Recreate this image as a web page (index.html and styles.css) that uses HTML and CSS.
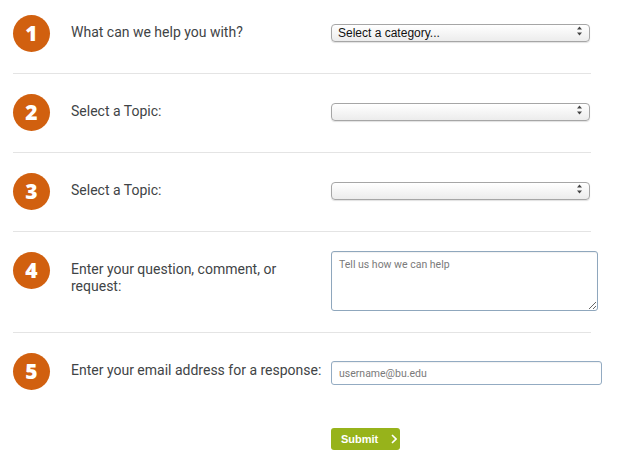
FILE: index.html
```html
<!DOCTYPE html>
<html lang="en">
<head>
  <meta charset="UTF-8">
  <title>Contact Us</title>
  <link rel="stylesheet" href="styles.css">
</head>
<body>
  <form class="help-form">
    <div class="step">
      <div class="num">1</div>
      <label class="step-label">What can we help you with?</label>
      <div class="select-wrap">
        <select class="select">
          <option>Select a category...</option>
        </select>
        <svg class="arrows" width="7" height="10" viewBox="0 0 7 10"><path d="M3.5 0.5 L6 3.5 H1 Z M3.5 9.5 L6 6.5 H1 Z" fill="#444"/></svg>
      </div>
    </div>

    <div class="step">
      <div class="num">2</div>
      <label class="step-label">Select a Topic:</label>
      <div class="select-wrap">
        <select class="select"><option></option></select>
        <svg class="arrows" width="7" height="10" viewBox="0 0 7 10"><path d="M3.5 0.5 L6 3.5 H1 Z M3.5 9.5 L6 6.5 H1 Z" fill="#444"/></svg>
      </div>
    </div>

    <div class="step">
      <div class="num">3</div>
      <label class="step-label">Select a Topic:</label>
      <div class="select-wrap">
        <select class="select"><option></option></select>
        <svg class="arrows" width="7" height="10" viewBox="0 0 7 10"><path d="M3.5 0.5 L6 3.5 H1 Z M3.5 9.5 L6 6.5 H1 Z" fill="#444"/></svg>
      </div>
    </div>

    <div class="step">
      <div class="num">4</div>
      <label class="step-label">Enter your question, comment, or request:</label>
      <textarea class="message" placeholder="Tell us how we can help"></textarea>
    </div>

    <div class="step last">
      <div class="num">5</div>
      <label class="step-label">Enter your email address for a response:</label>
      <input class="email" type="email" placeholder="username@bu.edu">
    </div>

    <div class="actions">
      <button type="button" class="submit">Submit
        <svg width="6" height="10" viewBox="0 0 6 10"><path d="M1 1 L5 5 L1 9" fill="none" stroke="#fff" stroke-width="1.6"/></svg>
      </button>
    </div>
  </form>
</body>
</html>
```

FILE: styles.css
```css
body {
  margin: 0;
  padding: 0 13px;
  background: #fff;
  font-family: Roboto, 'Liberation Sans', sans-serif;
  color: #3f4446;
}

.help-form {
  width: 578px;
}

.step {
  display: flex;
  align-items: flex-start;
  padding: 20px 0 21px;
  border-bottom: 1px solid #e4e4e4;
}

.step:first-child {
  padding-top: 15px;
}

.step.last {
  border-bottom: none;
  padding-bottom: 0;
}

.num {
  width: 37px;
  height: 37px;
  border-radius: 50%;
  background: #d1600f;
  color: #fff;
  font-family: 'Open Sans', sans-serif;
  font-weight: 800;
  font-size: 21px;
  line-height: 37px;
  text-align: center;
  flex-shrink: 0;
}

.step-label {
  flex: 0 0 260px;
  margin-left: 21px;
  padding: 9px 4px 0 0;
  box-sizing: border-box;
  font-size: 14px;
  line-height: 17px;
}

.select-wrap {
  position: relative;
  flex-shrink: 0;
  margin-top: 7px;
}

.select {
  appearance: none;
  -webkit-appearance: none;
  width: 259px;
  height: 18px;
  padding: 0 6px;
  border: 1px solid #a6a6a6;
  border-radius: 4px;
  background: linear-gradient(#ffffff, #ececec);
  box-shadow: 0 1px 1px rgba(0, 0, 0, 0.12);
  font-family: 'Liberation Sans', sans-serif;
  font-size: 12px;
  color: #111;
}

.arrows {
  position: absolute;
  right: 7px;
  top: 4px;
}

.message {
  flex-shrink: 0;
  width: 267px;
  height: 60px;
  margin: -1px 0 0;
  padding: 6px 7px;
  box-sizing: border-box;
  border: 1px solid #8fa7bd;
  border-radius: 3px;
  box-shadow: inset 0 1px 1px rgba(0, 0, 0, 0.06);
  font-family: Roboto, sans-serif;
  font-size: 10.5px;
}

.email {
  flex-shrink: 0;
  width: 271px;
  height: 24px;
  margin-top: 8px;
  padding: 0 7px;
  box-sizing: border-box;
  border: 1px solid #93abc2;
  border-radius: 3px;
  box-shadow: inset 0 1px 1px rgba(0, 0, 0, 0.06);
  font-family: Roboto, sans-serif;
  font-size: 10.5px;
}

.message::placeholder,
.email::placeholder {
  color: #7a7a7a;
}

.actions {
  padding: 38px 0 0 318px;
}

.submit {
  display: flex;
  align-items: center;
  gap: 13px;
  height: 22px;
  width: 69px;
  padding: 0 0 0 10px;
  border: none;
  border-radius: 3px;
  background: #97b31b;
  color: #fff;
  font-family: 'Liberation Sans', sans-serif;
  font-weight: bold;
  font-size: 11px;
  cursor: pointer;
}
```
